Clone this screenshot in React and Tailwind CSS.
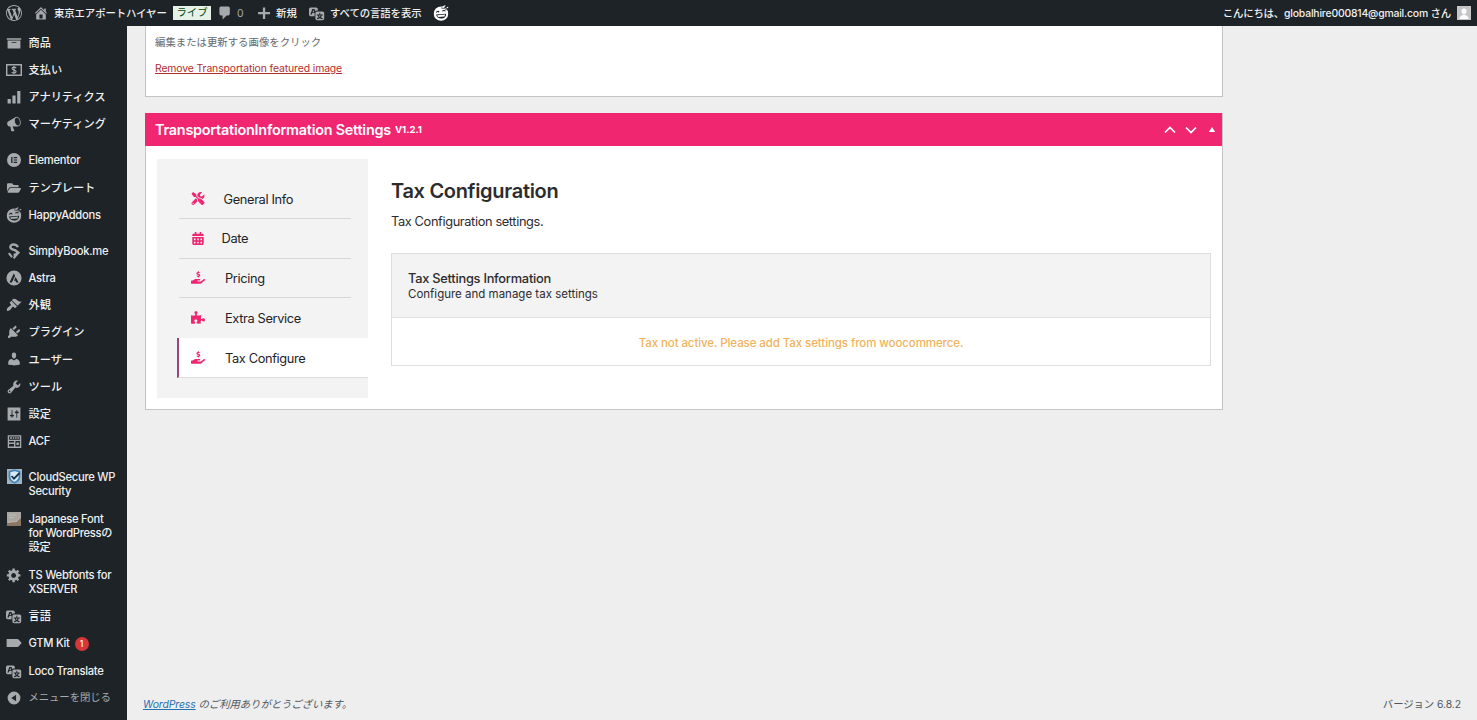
import React from 'react';
import { FaTools, FaCalendarAlt, FaHandHoldingUsd, FaPuzzlePiece, FaFolderOpen } from 'react-icons/fa';

const Dash = ({ d, className = "w-4 h-4", children }) => (
  <svg viewBox="0 0 20 20" fill="currentColor" fillRule="evenodd" className={`shrink-0 ${className}`}>
    {d && <path d={d} />}
    {children}
  </svg>
);

// Dashicons outlines, 20x20
const icons = {
  wordpress: "M20 10c0-5.51-4.49-10-10-10C4.48 0 0 4.49 0 10c0 5.52 4.48 10 10 10 5.51 0 10-4.48 10-10zM7.78 15.37L4.37 6.22c.55-.02 1.17-.08 1.17-.08.5-.06.44-1.13-.06-1.11 0 0-1.45.11-2.37.11-.18 0-.37 0-.58-.01C4.12 2.69 6.87 1.11 10 1.11c2.33 0 4.45.87 6.05 2.34-.68-.11-1.65.39-1.65 1.58 0 .74.45 1.36.9 2.1.35.61.55 1.36.55 2.46 0 1.49-1.4 5-1.4 5l-3.03-8.37c.54-.02.82-.17.82-.17.5-.05.44-1.25-.06-1.22 0 0-1.44.12-2.38.12-.87 0-2.33-.12-2.33-.12-.5-.03-.56 1.2-.06 1.22l.92.08 1.26 3.41zM17.41 10c.24-.64.74-1.87.43-4.25.7 1.29 1.05 2.71 1.05 4.25 0 3.29-1.73 6.24-4.4 7.78.97-2.59 1.94-5.2 2.92-7.78zM6.1 18.09C3.12 16.65 1.11 13.53 1.11 10c0-1.3.23-2.48.72-3.59C3.25 10.3 4.67 14.2 6.1 18.09zm4.03-6.63l2.58 6.98c-.86.29-1.76.45-2.71.45-.79 0-1.57-.11-2.29-.33.81-2.38 1.62-4.74 2.42-7.1z",
  home: "M16 8.5l1.53 1.53-1.06 1.06L10 4.6l-6.47 6.49-1.06-1.06L10 2.5l4 4v-2h2v4zm-6-2.46l6 5.99V18H4v-5.97zM12 17v-5H8v5h4z",
  comment: "M5 2h9c1.1 0 2 .9 2 2v7c0 1.1-.9 2-2 2h-2l-5 5v-5H5c-1.1 0-2-.9-2-2V4c0-1.1.9-2 2-2z",
  plus: "M17.5 8.8v2.8h-6V17.500H8.6v-5.9h-6V8.8h6V3h2.900v5.8z",
  translation: "M11 7H9.49c-.63 0-1.25.3-1.59.7L7 5H4.13l-2.39 7h1.69l.74-2H7v4H2c-1.1 0-2-.9-2-2V5c0-1.1.9-2 2-2h7c1.1 0 2 .9 2 2v2zM6.51 9H4.49l1-2.93zM10 8h7c1.1 0 2 .9 2 2v7c0 1.1-.9 2-2 2h-7c-1.1 0-2-.9-2-2v-7c0-1.1.9-2 2-2zm7.25 5v-1.08h-3.17V9.75h-1.16v2.17H9.75V13h1.28c.11.85.56 1.85 1.28 2.62-.87.36-1.89.62-2.31.62-.01.02.22.97.2 1.46.84 0 2.21-.5 3.28-1.15 1.09.65 2.48 1.15 3.34 1.15-.02-.49.2-1.44.2-1.46-.43 0-1.49-.27-2.38-.63.7-.77 1.14-1.77 1.25-2.61h1.36zm-3.81 1.93c-.5-.46-.85-1.13-1.01-1.93h2.09c-.17.8-.51 1.47-1 1.93l-.04.03s-.03-.02-.04-.03z",
  archive: "M19 4v2H1V4h18zM2 7h16v10H2V7zm11 3V9H7v1h6z",
  chart: "M2 12.5h4V18H2zM8 8h4v10H8zM14 2.5h4V18h-4z",
  megaphone: "M18.15 5.94c.46 1.62.38 3.22-.02 4.48-.42 1.28-1.26 2.18-2.3 2.48-.16.06-.26.06-.4.06-.06.02-.12.02-.18.02-.06.02-.14.02-.22.02h-6.8l2.22 5.5c.02.14-.06.26-.14.34-.08.1-.24.16-.34.16H6.95c-.1 0-.26-.06-.34-.16-.08-.08-.16-.2-.14-.34l-1-5.5H4.25l-.02-.02c-.5.06-1.08-.18-1.54-.62s-.88-1.08-1.06-1.88c-.24-.8-.2-1.56-.02-2.2.18-.62.58-1.08 1.06-1.3l.02-.02 9-5.4c.1-.06.18-.1.24-.16.06-.04.14-.08.24-.12.16-.08.28-.12.5-.18 1.04-.3 2.24.1 3.22.98s1.84 2.24 2.26 3.86zm-2.58 5.98h-.02c.4-.1.74-.34 1.04-.7.58-.7.86-1.76.86-3.04 0-.64-.1-1.3-.28-1.98-.34-1.36-1.02-2.5-1.78-3.24s-1.68-1.1-2.46-.88c-.82.22-1.4.96-1.7 2-.32 1.04-.28 2.36.06 3.72.38 1.36 1 2.5 1.8 3.24.78.74 1.62 1.1 2.48.88z",
  appearance: "M14.48 11.06L7.41 3.99l1.5-1.5c.5-.56 2.3-.47 3.51.32 1.21.8 1.43 1.28 2.91 2.1 1.18.64 2.45 1.26 4.45.85zm-.71.71L6.7 4.7 4.93 6.47c-.39.39-.39 1.02 0 1.41l1.06 1.06c.39.39.39 1.03 0 1.42-.6.6-1.43 1.11-2.21 1.69-.35.26-.7.53-1.01.84C1.43 14.23.4 16.08 1.4 17.07c.99 1 2.84-.03 4.18-1.36.31-.31.58-.66.85-1.02.57-.78 1.08-1.61 1.69-2.21.39-.39 1.02-.39 1.41 0l1.06 1.06c.39.39 1.02.39 1.41 0z",
  plugins: "M13.11 4.36L9.87 7.6 8 5.73l3.24-3.24c.35-.34 1.05-.2 1.56.32.52.51.66 1.21.31 1.55zm-8 1.77l.91-1.12 9.01 9.01-1.19.84c-.71.71-2.63 1.16-3.82 1.16H6.14L4.9 17.26c-.59.59-1.54.59-2.12 0-.59-.58-.59-1.53 0-2.12l1.24-1.24v-3.88c0-1.13.4-3.19 1.09-3.89zm7.26 3.97l3.24-3.24c.34-.35 1.04-.21 1.55.31.52.51.66 1.21.31 1.55l-3.24 3.25z",
  users: "M10 9.25c-2.27 0-2.73-3.44-2.73-3.44C7 4.02 7.82 2 9.97 2c2.16 0 2.98 2.02 2.71 3.81 0 0-.41 3.44-2.68 3.44zm0 2.57L12.72 10c2.39 0 4.52 2.33 4.52 4.53v2.49s-3.65 1.13-7.24 1.13c-3.65 0-7.24-1.13-7.24-1.13v-2.49c0-2.25 1.94-4.48 4.47-4.48z",
  tools: "M16.68 9.77c-1.34 1.34-3.3 1.67-4.95.99l-5.41 6.52c-.99.99-2.59.99-3.58 0s-.99-2.59 0-3.57l6.52-5.42c-.68-1.65-.35-3.61.99-4.95 1.28-1.28 3.12-1.62 4.72-1.06l-2.89 2.89 2.82 2.82 2.86-2.87c.53 1.58.18 3.39-1.08 4.65zM3.81 16.21c.4.39 1.04.39 1.43 0 .4-.4.4-1.04 0-1.43-.39-.4-1.03-.4-1.43 0-.39.39-.39 1.03 0 1.43z",
  settings: "M18 18V2H2v16zM8 11h1c.55 0 1 .45 1 1s-.45 1-1 1H8v1.5c0 .28-.22.5-.5.5s-.5-.22-.5-.5V13H6c-.55 0-1-.45-1-1s.45-1 1-1h1V5.5c0-.28.22-.5.5-.5s.5.22.5.5V11zm5-2h-1c-.55 0-1-.45-1-1s.45-1 1-1h1V5.5c0-.28.22-.5.5-.5s.5.22.5.5V7h1c.55 0 1 .45 1 1s-.45 1-1 1h-1v5.5c0 .28-.22.5-.5.5s-.5-.22-.5-.5V9z",
  acf: "M1 1.500h18v17H1zM2.800 3.200v4.400h14.400V3.200zM4 4.400h2.600v2H4zM7.700 4.400h2v2h-2zM10.800 4.400h2v2h-2zM13.900 4.400h2.300v2h-2.300zM2.800 9.400v2h6.600v-2zM2.800 13.400v3.200h6.600v-3.200zM11.200 9.400v7.200h6v-7.200zM12.600 11.200h3.200v3.600h-3.200z",
  gear: "M18 12h-2.18c-.17.7-.44 1.35-.81 1.93l1.54 1.54-2.1 2.1-1.54-1.54c-.58.36-1.23.63-1.91.79V19H8v-2.18c-.68-.16-1.33-.43-1.91-.79l-1.54 1.54-2.12-2.12 1.54-1.54c-.36-.58-.63-1.23-.79-1.91H1V9.03h2.17c.16-.7.44-1.35.8-1.94L2.43 5.55l2.1-2.1 1.54 1.54c.58-.37 1.24-.64 1.93-.81V2h3v2.18c.68.16 1.33.43 1.91.79l1.54-1.54 2.12 2.12-1.54 1.54c.36.59.64 1.24.8 1.94H18V12zm-8.5 1.5c1.66 0 3-1.34 3-3s-1.34-3-3-3-3 1.34-3 3 1.34 3 3 3z",
  tag: "M0.8 5h13.4c.8 0 1.3.3 1.8.9L19.6 10 16 14.1c-.5.6-1 .9-1.8.9H.8z",
  collapse: "M10 2a8 8 0 1 0 0 16 8 8 0 0 0 0-16zM12.6 5.8v8.4L6.6 10z",
  elementor: "M10 0a10 10 0 1 0 0 20 10 10 0 0 0 0-20zM6 5.800h1.800v8.400H6zM9.500 5.800h5v1.700h-5zM9.500 9.150h5v1.700h-5zM9.500 12.500h5v1.700h-5z",
  astra: "M10 .5a9.500 9.500 0 1 0 0 19 9.500 9.500 0 0 0 0-19zM9.800 4.200l1.500 3.200-4 8.100H4.400zM12 8.800l3.800 6.700h-3l-1-2.100h-1.800z",
};

const HappyIcon = ({ face, ink, className = "w-4 h-4" }) => (
  <svg viewBox="0 0 20 20" fill="none" className={`shrink-0 ${className}`}>
    <circle cx="10" cy="10.800" r="9" fill={face} />
    <path d="M10.200 3.600c2.300 1 5 .8 6.600-1.200M14.800 5.200c1.500.3 3-.1 3.800-1.200" stroke={ink} strokeWidth="1" />
    <path d="M12 1.800c1.500.3 2.600 0 3.300-1.200M17.200 3.600c.7-.2 1.200-.6 1.500-1.200" stroke={face} strokeWidth="1.500" />
    <path d="M4 9.400c.7-1.600 2.700-1.800 3.700-.6M11.700 7.800c1-1.400 3-1.300 3.900.1" stroke={ink} strokeWidth="1.400" />
    <path d="M3.800 12l12.600-1.100c.2 3.500-2.200 5.900-5.600 6.100-3.600.2-6.300-1.700-7-5z" fill={ink} />
    <path d="M5.300 12.900l9.800-.9-.6 2.300-8.200.8z" fill={face} />
  </svg>
);

const MoneyIcon = () => (
  <Dash>
    <path d="M0 2.5h20v15H0zM1.8 4.3v11.4h16.4V4.3z" />
    <path d="M12.6 7.6c-.6-1-1.5-1.2-2.6-1.2-1.4 0-2.4.7-2.4 1.8 0 2.5 5 1.2 5 3.7 0 1.1-1 1.9-2.6 1.9-1.2 0-2.2-.4-2.7-1.4M10 5v10" fill="none" stroke="currentColor" strokeWidth="1.5" />
  </Dash>
);

const SimplyBookIcon = () => (
  <Dash>
    <path d="M14.800 5.300C14 2.500 10.500 1.200 7.800 2.100 4.800 3.100 4.600 6.400 7.300 7.700c2.500 1.200 6.500 1 6.600 3.900.1 2.200-2.300 3.100-4.400 3" fill="none" stroke="currentColor" strokeWidth="3" />
    <path d="M3.500 12.600l4 5M9.400 19l7.200-8" fill="none" stroke="currentColor" strokeWidth="2.600" />
  </Dash>
);

const ShieldIcon = () => (
  <svg viewBox="0 0 15 15" className="w-[15px] h-[15px] shrink-0">
    <rect width="15" height="15" fill="#9fb4c4" />
    <path d="M7.500 1.200l5 1.600v4.500c0 3-2 5.200-5 6.500-3-1.300-5-3.500-5-6.500V2.800z" fill="#d9e8f2" stroke="#3f83b5" strokeWidth="1.700" />
    <path d="M4.500 7l2.500 2.700L12.600 4" fill="none" stroke="#17324a" strokeWidth="1.800" />
  </svg>
);

const FontIcon = () => (
  <svg viewBox="0 0 14 14" className="w-[14px] h-[14px] shrink-0">
    <rect width="14" height="14" fill="#aaa7a3" />
    <path d="M0 11l8-1 6-4v8H0z" fill="#8b7565" />
    <path d="M1 10.500l5-1 3 .5 4-4" fill="none" stroke="#c3b3a2" strokeWidth="1" />
    <path d="M2 3h7M2 5.500h5" stroke="#bdbcba" strokeWidth="1" />
  </svg>
);

const menu = [
  { label: "商品", icon: <Dash d={icons.archive} /> },
  { label: "支払い", icon: <MoneyIcon /> },
  { label: "アナリティクス", icon: <Dash d={icons.chart} /> },
  { label: "マーケティング", icon: <Dash d={icons.megaphone} />, gap: true },
  { label: "Elementor", icon: <Dash d={icons.elementor} className="w-[14px] h-[14px]" /> },
  { label: "テンプレート", icon: <FaFolderOpen className="w-[14px] h-[14px]" /> },
  { label: "HappyAddons", icon: <HappyIcon face="#a7aaad" ink="#1d2327" />, gap: true },
  { label: "SimplyBook.me", icon: <SimplyBookIcon /> },
  { label: "Astra", icon: <Dash d={icons.astra} /> },
  { label: "外観", icon: <Dash d={icons.appearance} /> },
  { label: "プラグイン", icon: <Dash d={icons.plugins} /> },
  { label: "ユーザー", icon: <Dash d={icons.users} /> },
  { label: "ツール", icon: <Dash d={icons.tools} /> },
  { label: "設定", icon: <Dash d={icons.settings} /> },
  { label: "ACF", icon: <Dash d={icons.acf} className="w-[15px] h-[15px]" />, gap: true },
  { label: <>CloudSecure WP<br />Security</>, icon: <ShieldIcon /> },
  { label: <>Japanese Font<br />for WordPressの<br />設定</>, icon: <FontIcon /> },
  { label: <>TS Webfonts for<br />XSERVER</>, icon: <Dash d={icons.gear} /> },
  { label: "言語", icon: <Dash d={icons.translation} /> },
  { label: "GTM Kit", icon: <Dash d={icons.tag} />, badge: 1 },
  { label: "Loco Translate", icon: <Dash d={icons.translation} /> },
];

// kana and kanji labels keep their natural spacing
const isLatin = (label) => typeof label !== "string" || /^[A-Z]/.test(label);

const tabs = [
  { label: "General Info", icon: FaTools, pad: "pl-[19px]" },
  { label: "Date", icon: FaCalendarAlt, pad: "pl-[17px]" },
  { label: "Pricing", icon: FaHandHoldingUsd, pad: "pl-[20.5px]" },
  { label: "Extra Service", icon: FaPuzzlePiece, pad: "pl-[20.5px]" },
  { label: "Tax Configure", icon: FaHandHoldingUsd, pad: "pl-[20.5px]", active: true },
];

const AdminBar = () => (
  <header className="flex items-center h-[26px] shrink-0 bg-[#1d2327] text-[#f0f0f1] text-[10.4px] leading-[26px] font-medium whitespace-nowrap">
    <Dash d={icons.wordpress} className="w-4 h-4 ml-[6px] text-[#a7aaad]" />
    <Dash d={icons.home} className="w-4 h-4 ml-[11px] text-[#a7aaad]" />
    <span className="ml-[5px] w-[119px] pt-px tracking-[-0.1px]">東京エアポートハイヤー</span>
    <span className="w-[38px] h-[14px] bg-[#e6f2e8] text-[#00450c] text-center leading-[14px] font-normal">ライブ</span>
    <Dash d={icons.comment} className="w-4 h-4 ml-[6px] text-[#a7aaad]" />
    <span className="ml-[4px] w-[20px] pt-px font-normal text-[#a7aaad]">0</span>
    <Dash d={icons.plus} className="w-4 h-4 -ml-px text-[#a7aaad]" />
    <span className="ml-[4px] w-[33px] pt-px">新規</span>
    <Dash d={icons.translation} className="w-4 h-4 text-[#a7aaad]" />
    <span className="ml-[5px] w-[103px] pt-px tracking-[-0.1px]">すべての言語を表示</span>
    <HappyIcon face="#ffffff" ink="#1d2327" />
    <span className="ml-auto pt-px tracking-[-0.18px]">こんにちは、globalhire000814@gmail.com さん</span>
    <svg viewBox="0 0 14 14" className="w-[14px] h-[14px] ml-[6px] mr-[6px]">
      <rect width="14" height="14" fill="#c5c5c5" />
      <path d="M7 2.500c1.700 0 2.500 1.200 2.500 2.800S8.500 8.500 7 8.500 4.500 7 4.500 5.300 5.300 2.500 7 2.500zM2.500 13c0-2.500 1.500-4 4.500-4s4.500 1.500 4.500 4z" fill="#fff" />
    </svg>
  </header>
);

const Sidebar = () => (
  <nav className="w-[127px] shrink-0 bg-[#1d2327] pt-[3.2px] text-[#f0f0f1] text-[11.2px] leading-[14.4px] font-medium whitespace-nowrap">
    {menu.map((item, index) => (
      <div key={index} className={item.gap ? "flex mb-[8.8px]" : "flex"}>
        <div className="w-[28.5px] h-[27.2px] flex items-center justify-center text-[#a7aaad]">{item.icon}</div>
        <div className={isLatin(item.label) ? "pt-[6.7px] pb-[6.1px] tracking-[-0.27px]" : "pt-[6.7px] pb-[6.1px]"}>{item.label}</div>
        {item.badge && (
          <span className="ml-[5px] mt-[7px] w-[14px] h-[14px] rounded-full bg-[#d63638] text-white text-[8.5px] leading-[14px] text-center">{item.badge}</span>
        )}
      </div>
    ))}
    <div className="flex items-center h-[27.2px] text-[#a7aaad] text-[10.4px] font-normal">
      <div className="w-[28.5px] flex justify-center"><Dash d={icons.collapse} /></div>
      <span className="tracking-[-0.1px]">メニューを閉じる</span>
    </div>
  </nav>
);

const SettingsTabs = () => (
  <div className="w-[211px] h-[239px] shrink-0 bg-[#f3f3f3] pt-[20px] pl-[20px]">
    {tabs.map(({ label, icon: Icon, pad, active }) => (
      <div
        key={label}
        className={active
          ? "flex items-center h-[39.8px] bg-white border-l-2 border-[#a0427c] border-b border-b-[#ddd] pl-[12px]"
          : "flex items-center h-[39.8px] ml-[2px] mr-[17px] border-b border-[#d8d8d8] pl-[12px] nth-4:border-transparent"}
      >
        <Icon className="w-[14px] h-[13px] -ml-[0.5px] text-[#ef2672]" />
        <span className={`${pad} pt-[1.5px] text-[12.8px] tracking-[-0.35px] text-[#1d2327]`}>{label}</span>
      </div>
    ))}
  </div>
);

const TaxPanel = () => (
  <div className="flex-1 pl-[23px] text-[#2c2c2e]">
    <h2 className="mt-[18px] text-[20px] leading-[28px] font-semibold tracking-[-0.31px]">Tax Configuration</h2>
    <p className="mt-[8px] text-[12.8px] leading-[18px] tracking-[-0.37px]">Tax Configuration settings.</p>
    <div className="mt-[22px] border border-[#ddd]">
      <div className="h-[64px] bg-[#f3f3f3] border-b border-[#ddd] pl-[16px] pt-[17px]">
        <div className="text-[12.8px] leading-[16px] font-medium tracking-[-0.24px]">Tax Settings Information</div>
        <div className="text-[11.5px] leading-[15px]">Configure and manage tax settings</div>
      </div>
      <div className="h-[47px] leading-[51px] text-center text-[11.5px] font-medium tracking-[-0.09px] text-[#efb35c]">
        Tax not active. Please add Tax settings from woocommerce.
      </div>
    </div>
  </div>
);

const App = () => {
  return (
    <div className="w-[1477px] h-[720px] flex flex-col overflow-hidden bg-[#eeeeee] font-['Inter','Noto_Sans_CJK_JP',sans-serif]">
      <AdminBar />
      <div className="flex flex-1 min-h-0">
        <Sidebar />
        <main className="flex-1 flex flex-col pl-[18px]">
          <div className="w-[1078px] h-[71px] bg-white border border-t-0 border-[#c3c4c7] pl-[9px] pt-[8px]">
            <p className="text-[10.4px] leading-[17px] text-[#646970]">編集または更新する画像をクリック</p>
            <a className="block mt-[10px] text-[10.4px] leading-[16px] tracking-[-0.11px] text-[#b32d2e] underline">Remove Transportation featured image</a>
          </div>

          <section className="w-[1078px] h-[297px] mt-[16px] bg-white border border-[#c3c4c7]">
            <div className="flex items-center h-[33px] -mt-px -ml-px bg-[#f12671] text-white pl-[10px] pr-[5px]">
              <h1 className="text-[14.4px] font-semibold tracking-[-0.23px]">TransportationInformation Settings</h1>
              <span className="ml-[4px] mt-[2px] text-[9.6px] font-bold">V1.2.1</span>
              <svg viewBox="0 0 54 12" className="w-[54px] h-[12px] ml-auto" fill="none" stroke="#fff" strokeWidth="1.7">
                <path d="M2 8.500l5-5 5 5M23 3.500l5 5 5-5" />
                <path d="M45.800 8l3.200-5L52.200 8z" fill="#fff" stroke="none" />
              </svg>
            </div>
            <div className="flex pl-[11px] pr-[11px] pt-[13px]">
              <SettingsTabs />
              <TaxPanel />
            </div>
          </section>

          <footer className="mt-auto flex justify-between -ml-[2px] pr-[16px] pb-[6px] text-[10.4px] leading-[18px] tracking-[-0.08px] text-[#50575e]">
            <span className="italic"><a className="text-[#2271b1] underline">WordPress</a> のご利用ありがとうございます。</span>
            <span>バージョン 6.8.2</span>
          </footer>
        </main>
      </div>
    </div>
  );
};

export default App;
